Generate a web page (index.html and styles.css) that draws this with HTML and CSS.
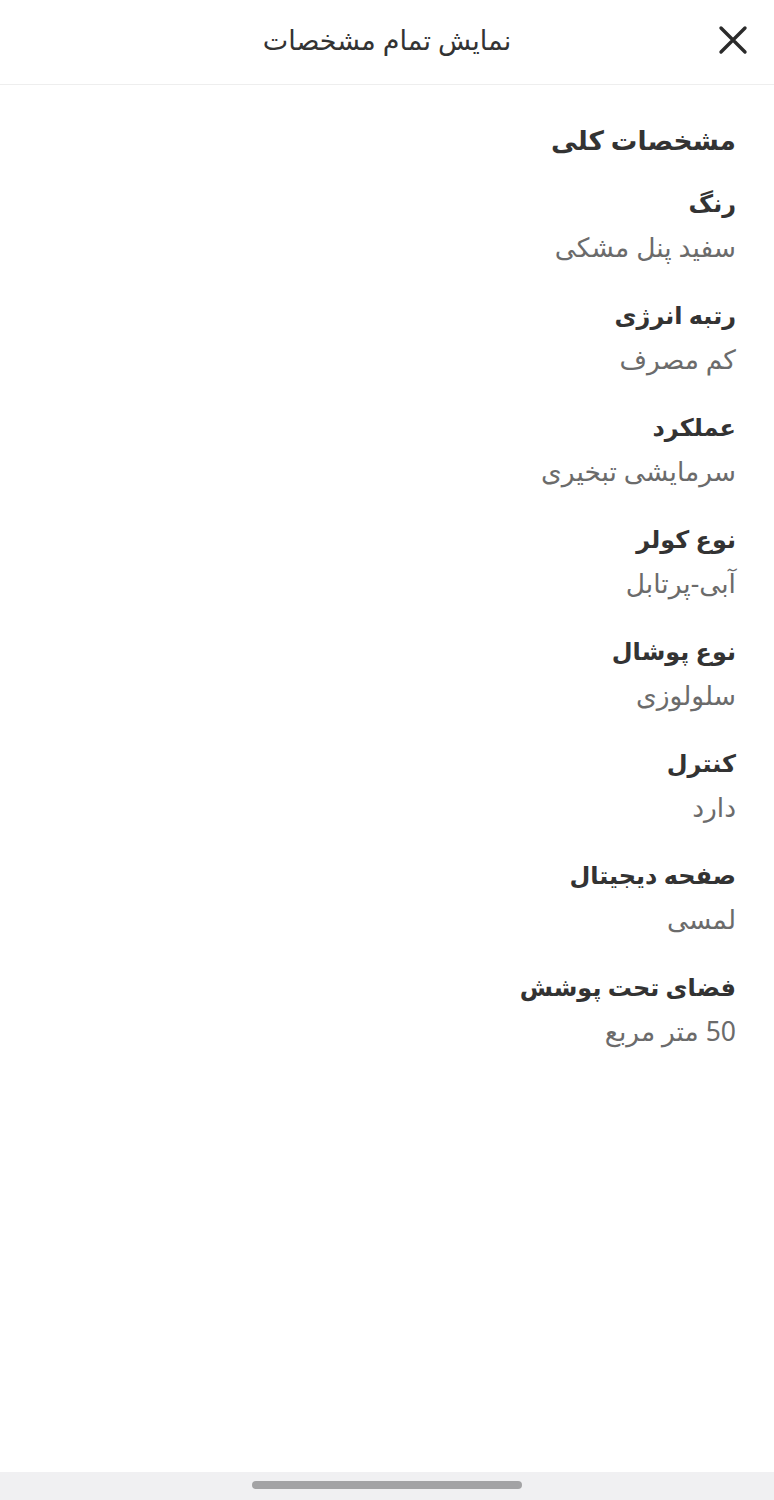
FILE: index.html
```html
<!DOCTYPE html>
<html lang="fa" dir="rtl">
<head>
	<meta charset="UTF-8">
	<title>نمایش تمام مشخصات</title>
	<link rel="stylesheet" href="styles.css">
</head>
<body>
	<div class="page">
		<div class="header">
			<div class="close">
				<svg width="30" height="30" viewBox="0 0 30 30"><path d="M3 3 L27 27 M27 3 L3 27" stroke="#2b2b2b" stroke-width="3.4" stroke-linecap="round"/></svg>
			</div>
			<div class="title">نمایش تمام مشخصات</div>
		</div>

		<div class="content">
			<h2 class="section">مشخصات کلی</h2>
			<ul class="specs">
				<li><p class="label">رنگ</p><p class="value">سفید پنل مشکی</p></li>
				<li><p class="label">رتبه انرژی</p><p class="value">کم مصرف</p></li>
				<li><p class="label">عملکرد</p><p class="value">سرمایشی تبخیری</p></li>
				<li><p class="label">نوع کولر</p><p class="value">آبی-پرتابل</p></li>
				<li><p class="label">نوع پوشال</p><p class="value">سلولوزی</p></li>
				<li><p class="label">کنترل</p><p class="value">دارد</p></li>
				<li><p class="label">صفحه دیجیتال</p><p class="value">لمسی</p></li>
				<li><p class="label">فضای تحت پوشش</p><p class="value">50 متر مربع</p></li>
			</ul>
		</div>

		<div class="homebar"><span></span></div>
	</div>
</body>
</html>
```

FILE: styles.css
```css
*{
	padding: 0;
	margin: 0;
	box-sizing: border-box;
}
ul,li{
	list-style: none;
}
body{
	background: #fff;
	font-family: "Noto Sans", "DejaVu Sans", sans-serif;
	color: #333;
}
.page{
	height: 1500px;
	display: flex;
	flex-direction: column;
}
.header{
	height: 85px;
	border-bottom: 1px solid #eeeeee;
	position: relative;
	display: flex;
	align-items: center;
	justify-content: center;
}
.title{
	font-size: 27px;
	line-height: 40px;
	margin-top: -4px;
	color: #333;
}
.close{
	position: absolute;
	left: 718px;
	top: 25px;
	width: 30px;
	height: 30px;
}
.content{
	flex: 1;
	padding: 35px 38px 0 38px;
}
.section{
	font-size: 26.5px;
	font-weight: bold;
	line-height: 40px;
	color: #333;
	margin-bottom: 20px;
}
.specs{
	display: flex;
	flex-direction: column;
	gap: 22px;
}
.label{
	font-size: 24px;
	font-weight: bold;
	line-height: 45px;
	color: #333;
}
.value{
	font-size: 26.5px;
	line-height: 45px;
	color: #6b6b6b;
}
.homebar{
	height: 28px;
	background: #f0f0f2;
	display: flex;
	align-items: center;
	justify-content: center;
}
.homebar span{
	width: 270px;
	height: 8px;
	border-radius: 4px;
	background: #a3a3a5;
	margin-top: -2px;
}
```
